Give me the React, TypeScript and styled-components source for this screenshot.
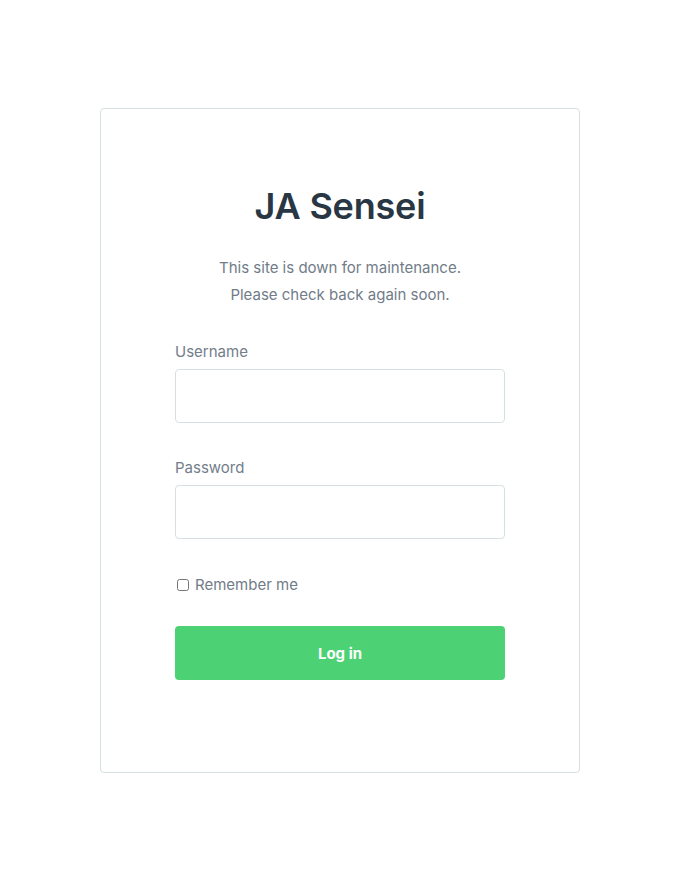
import { FC } from "react";
import styled, { createGlobalStyle } from "styled-components";

const GlobalStyle = createGlobalStyle`
  html, body {
    margin: 0;
    padding: 0;
    background: #ffffff;
  }

  body {
    font-family: Inter, "Open Sans", sans-serif;
    color: #2a3644;
  }

  * {
    box-sizing: border-box;
  }
`;

const Page = styled.div`
  padding: 108px 0 98px 100px;
`;

const Card = styled.form`
  width: 480px;
  height: 665px;
  border: 1px solid #d6e0e2;
  border-radius: 4px;
  padding: 75px 74px 0;
  display: flex;
  flex-direction: column;
`;

const Title = styled.h1`
  margin: 0;
  font-size: 36px;
  line-height: 44px;
  font-weight: 600;
  letter-spacing: -0.2px;
  text-align: center;
  color: #293643;
`;

const Notice = styled.p`
  margin: 26px 0 0;
  font-size: 15px;
  line-height: 27px;
  text-align: center;
  color: #717c88;
`;

const Field = styled.div<{ $first?: boolean }>`
  display: flex;
  flex-direction: column;
  margin-top: ${({ $first }) => ($first ? "34px" : "35px")};
`;

const Label = styled.label`
  font-size: 15px;
  line-height: 20px;
  color: #737e8a;
  margin-bottom: 7px;
`;

const Input = styled.input`
  height: 54px;
  width: 100%;
  border: 1px solid #d6e0e2;
  border-radius: 4px;
  padding: 0 14px;
  font: inherit;
  outline: none;
`;

const Remember = styled.label`
  display: flex;
  align-items: center;
  gap: 6px;
  margin-top: 36px;
  font-size: 15px;
  line-height: 20px;
  color: #717c88;
`;

const Check = styled.input`
  margin: 0 0 0 2px;
  width: 12px;
  height: 12px;
`;

const Submit = styled.button`
  margin-top: 31px;
  height: 54px;
  width: 100%;
  border: none;
  border-radius: 4px;
  background: #4cd174;
  color: #ffffff;
  font-family: inherit;
  font-size: 15px;
  font-weight: 700;
  cursor: pointer;
`;

const App: FC = () => (
  <>
    <GlobalStyle />
    <Page>
      <Card onSubmit={(e) => e.preventDefault()}>
        <Title>JA Sensei</Title>
        <Notice>
          This site is down for maintenance.
          <br />
          Please check back again soon.
        </Notice>
        <Field $first>
          <Label htmlFor="username">Username</Label>
          <Input id="username" type="text" />
        </Field>
        <Field>
          <Label htmlFor="password">Password</Label>
          <Input id="password" type="password" />
        </Field>
        <Remember>
          <Check type="checkbox" />
          Remember me
        </Remember>
        <Submit type="submit">Log in</Submit>
      </Card>
    </Page>
  </>
);

export default App;
